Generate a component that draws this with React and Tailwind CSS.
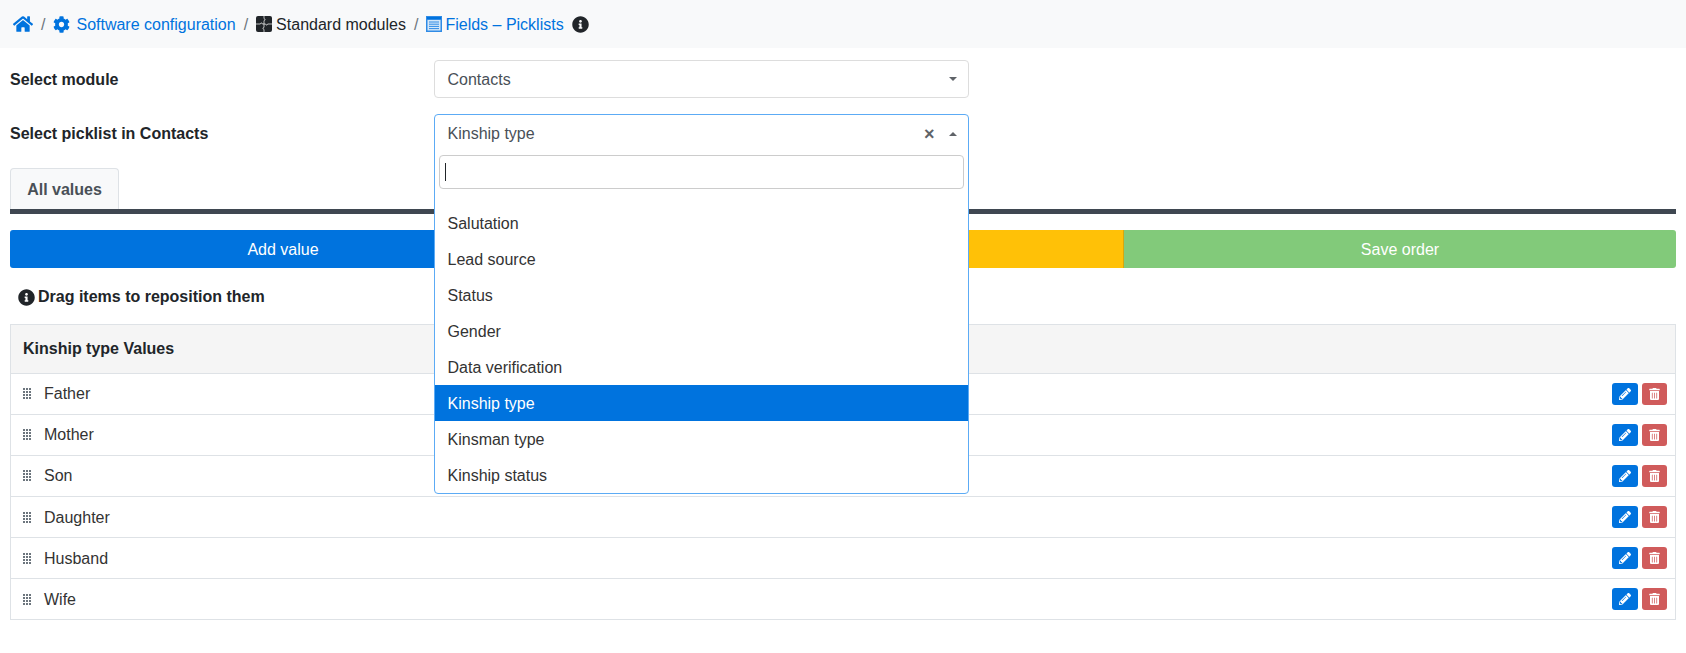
import React from 'react';
import { FaHome, FaCog, FaInfoCircle, FaPencilAlt, FaTrashAlt } from 'react-icons/fa';

const options = ['Salutation', 'Lead source', 'Status', 'Gender', 'Data verification', 'Kinship type', 'Kinsman type', 'Kinship status'];
const values = ['Father', 'Mother', 'Son', 'Daughter', 'Husband', 'Wife'];

function PuzzleIcon() {
  return (
    <svg viewBox="0 0 16 16" className="w-4 h-4 shrink-0">
      <rect width="16" height="16" rx="2" fill="#212529" />
      <path d="M8 0v2.6c1.4.2 1.4 1.8 0 2V8h-1.6c-.2-1.4-1.8-1.4-2 0H0M8 16v-2.6c-1.4-.2-1.4-1.8 0-2V8h1.6c.2 1.4 1.8 1.4 2 0H16" fill="none" stroke="#fff" strokeWidth="0.7" />
    </svg>
  );
}

function TableIcon() {
  return (
    <svg viewBox="0 0 16 16" className="w-4 h-4 shrink-0">
      <rect width="16" height="16" fill="#2f8be6" />
      <rect x="1" y="1" width="14" height="2" fill="#0073de" />
      <rect x="1.5" y="4" width="13" height="10.5" fill="#d5e7f8" />
      <path d="M3 6h10M3 8.2h10M3 10.4h10M3 12.6h10" stroke="#2f8be6" strokeWidth="1" />
    </svg>
  );
}

function GripIcon() {
  const dots = [];
  for (let x = 0; x < 3; x++) {
    for (let y = 0; y < 4; y++) {
      dots.push(<rect key={x + '-' + y} x={x * 3} y={y * 3} width="2" height="2" fill="#6c757d" />);
    }
  }
  return (
    <svg viewBox="0 0 8 11" className="w-[8px] h-[11px] shrink-0">
      {dots}
    </svg>
  );
}

function Caret({ up }) {
  return up
    ? <span className="w-0 h-0 border-x-[4px] border-x-transparent border-b-[4px] border-b-[#5f6368]" />
    : <span className="w-0 h-0 border-x-[4px] border-x-transparent border-t-[4px] border-t-[#5f6368]" />;
}

export default function App() {
  return (
    <div className="min-h-screen bg-white text-base leading-6 text-[#212529] font-['Liberation_Sans',Arial,sans-serif]">
      <nav className="h-12 bg-[#f8f9fa] flex items-center pl-[13px]">
        <FaHome className="w-[20px] h-[18px] text-[#0073de]" />
        <span className="mx-2 pt-px text-[#6c757d]">/</span>
        <FaCog className="w-[17px] h-[17px] mr-[6px] text-[#0073de]" />
        <span className="pt-px text-[#0073de]">Software configuration</span>
        <span className="mx-2 pt-px text-[#6c757d]">/</span>
        <PuzzleIcon />
        <span className="ml-1 pt-px">Standard modules</span>
        <span className="mx-2 pt-px text-[#6c757d]">/</span>
        <TableIcon />
        <span className="ml-[3px] pt-px text-[#0073de]">Fields – Picklists</span>
        <FaInfoCircle className="w-[17px] h-[17px] ml-2" />
      </nav>

      <div className="px-[10px] pt-3">
        <div className="flex items-center h-[38px]">
          <label className="w-[423.5px] pt-px font-bold">Select module</label>
          <div className="w-[535px] h-[38px] border border-[#ddd] rounded flex items-center justify-between pl-[13px] pr-[11px] text-[#495057]">
            <span className="pt-px">Contacts</span>
            <Caret />
          </div>
        </div>

        <div className="flex items-center h-[38px] mt-4">
          <label className="w-[423.5px] pt-px font-bold">Select picklist in Contacts</label>
          <div className="relative z-10 w-[535px] h-[38px]">
            <div className="absolute top-0 left-0 w-full h-[380px] bg-white border border-[#5cabf5] rounded">
              <div className="h-[38px] flex items-center pl-[13px] pr-[11px] text-[#495057]">
                <span className="flex-1">Kinship type</span>
                <span className="text-[#5f6368] text-lg leading-none font-bold mr-[14px]">×</span>
                <Caret up />
              </div>
              <div className="mx-1 mt-[2px] h-[34px] border border-[#ccc] rounded flex items-center pl-[5px]">
                <span className="w-px h-[18px] bg-[#212529]" />
              </div>
              <ul className="mt-[16px]">
                {options.map((o) => (
                  <li
                    key={o}
                    className={
                      o === 'Kinship type'
                        ? 'h-9 flex items-center pl-[13px] pt-px bg-[#0073de] text-white'
                        : 'h-9 flex items-center pl-[13px] pt-px text-[#333]'
                    }
                  >
                    {o}
                  </li>
                ))}
              </ul>
            </div>
          </div>
        </div>

        <div className="mt-4 border-b-[5px] border-[#3f4751]">
          <div className="w-[109px] h-[41px] pt-px bg-[#f8f9fa] border border-b-0 border-[#dee2e6] rounded-t flex items-center justify-center font-bold text-[#495057]">
            All values
          </div>
        </div>

        <div className="flex h-[38px] mt-4 text-white rounded-[3px] overflow-hidden">
          <div className="w-[546px] pt-px bg-[#0073de] flex items-center justify-center">Add value</div>
          <div className="w-[568px] bg-[#ffc107] border-r border-[#d6a70f]" />
          <div className="flex-1 pt-px bg-[#82ca7a] flex items-center justify-center">Save order</div>
        </div>

        <div className="flex items-center h-6 mt-[17px] pl-2 font-bold">
          <FaInfoCircle className="w-[17px] h-[17px] mr-[3px]" />
          <span>Drag items to reposition them</span>
        </div>

        <div className="mt-[15px] border border-[#dee2e6]">
          <div className="h-[48.5px] bg-[#f5f5f5] border-b border-[#dee2e6] flex items-center pl-3 font-bold">
            Kinship type Values
          </div>
          {values.map((v, i) => (
            <div
              key={v}
              className={
                i === values.length - 1
                  ? 'h-[40px] flex items-center pl-3 pr-2'
                  : 'h-[41.2px] flex items-center pl-3 pr-2 border-b border-[#dee2e6]'
              }
            >
              <GripIcon />
              <span className="ml-[13px] pt-px flex-1 text-[#333]">{v}</span>
              <button className="w-[26px] h-[22px] rounded-[3px] bg-[#0073de] text-white flex items-center justify-center">
                <FaPencilAlt className="w-[12px] h-[12px]" />
              </button>
              <button className="w-[25px] h-[22px] ml-1 rounded-[3px] bg-[#d05b5b] text-white flex items-center justify-center">
                <FaTrashAlt className="w-[11px] h-[12px]" />
              </button>
            </div>
          ))}
        </div>
      </div>
    </div>
  );
}
